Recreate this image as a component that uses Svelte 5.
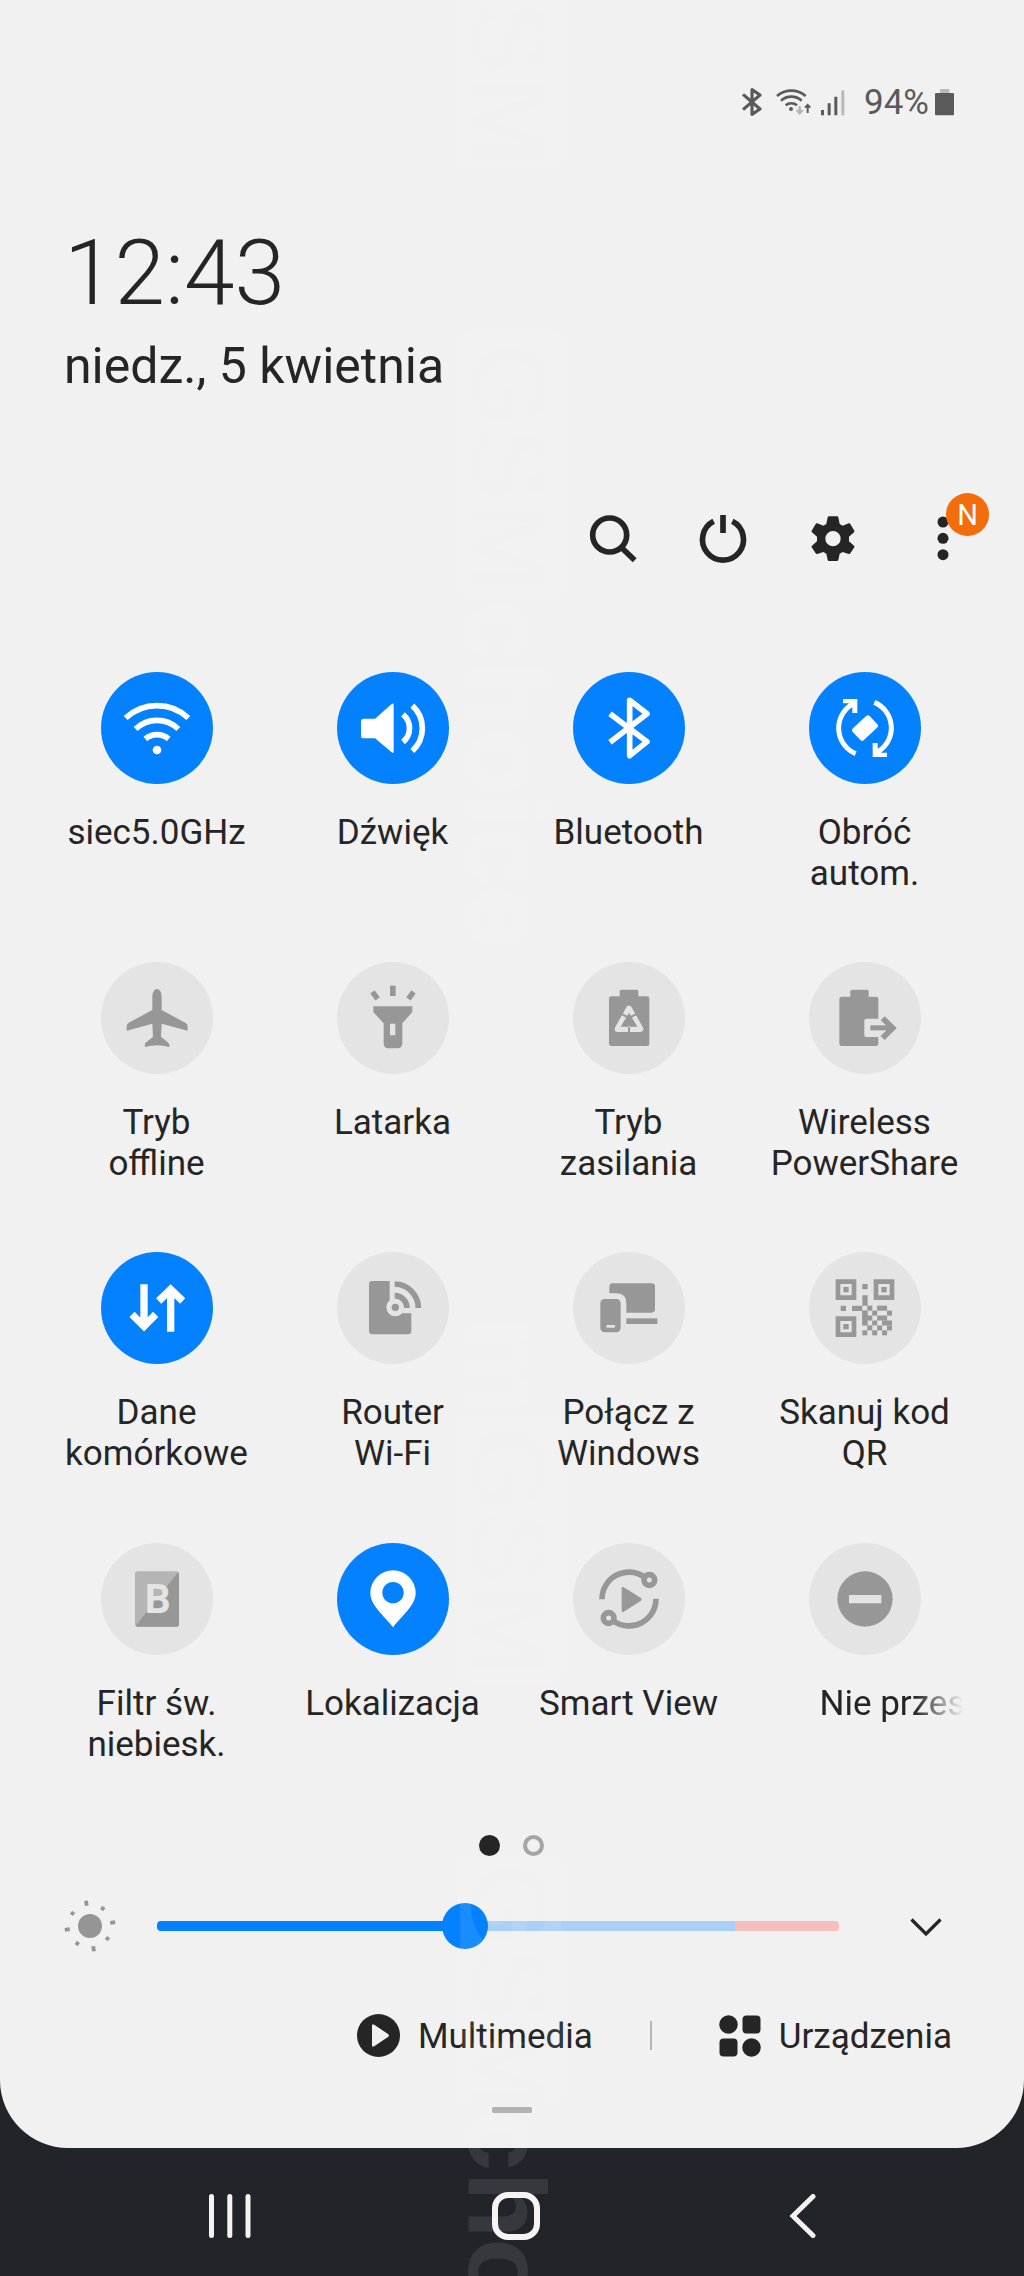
<script>
    const tiles = [
        { icon: 'wifi', label: ['siec5.0GHz'], active: true },
        { icon: 'sound', label: ['Dźwięk'], active: true },
        { icon: 'bluetooth', label: ['Bluetooth'], active: true },
        { icon: 'rotate', label: ['Obróć', 'autom.'], active: true },
        { icon: 'plane', label: ['Tryb', 'offline'] },
        { icon: 'torch', label: ['Latarka'] },
        { icon: 'power', label: ['Tryb', 'zasilania'] },
        { icon: 'share', label: ['Wireless', 'PowerShare'] },
        { icon: 'data', label: ['Dane', 'komórkowe'], active: true },
        { icon: 'router', label: ['Router', 'Wi-Fi'] },
        { icon: 'windows', label: ['Połącz z', 'Windows'] },
        { icon: 'qr', label: ['Skanuj kod', 'QR'] },
        { icon: 'filter', label: ['Filtr św.', 'niebiesk.'] },
        { icon: 'location', label: ['Lokalizacja'], active: true },
        { icon: 'smartview', label: ['Smart View'] },
        { icon: 'dnd', label: ['Nie przes'], scrolling: true }
    ];

    // lower right part of the QR icon, one string per row
    const qrRows = ['010110', '101001', '110110', '101011', '010101', '101010'];
    const qrCells = qrRows.flatMap((row, y) =>
        [...row].map((on, x) => ({ on: on === '1', x, y })).filter((cell) => cell.on)
    );

    const rays = [0, 45, 90, 135, 180, 225, 270, 315];

    let brightness = 45.2;
    let warning = 84.8;
</script>

<div class="screen">
    <main class="panel">
        <div class="status">
            <svg class="st-bt" viewBox="0 0 60 84" fill="none" stroke="#5a5a5a" stroke-width="9.500" stroke-linejoin="round">
                <path d="M3 19L54 63L30 79V5L54 21L3 65" />
            </svg>
            <svg class="st-wifi" viewBox="0 0 108 84" fill="none" stroke="#5a5a5a" stroke-width="8">
                <path d="M3 24A66 66 0 0 1 89 24M15 38A46 46 0 0 1 77 38M29 52A26 26 0 0 1 63 52" />
                <circle cx="45" cy="63" r="6" fill="#5a5a5a" stroke="none" />
                <path d="M71 54V72M62 66L71 76L80 66" stroke="#b5b5b5" stroke-width="7" />
                <path d="M95 75V54M87 59L95 51L103 59" stroke-width="6" />
            </svg>
            <svg class="st-signal" viewBox="0 0 72 84">
                <path d="M0 66h9v16h-9zM20 46h9v36h-9zM40 26h9v56h-9z" fill="#5a5a5a" />
                <path d="M61 7h9v75h-9z" fill="#b9b9b9" />
            </svg>
            <span class="percent">94%</span>
            <svg class="st-battery" viewBox="0 0 57 84">
                <path d="M15 3H43V16H15z" fill="#b9b9b9" />
                <rect y="15" width="57" height="67" rx="3" fill="#5a5a5a" />
            </svg>
        </div>

        <header class="clock">
            <div class="time">12:43</div>
            <div class="date">niedz., 5 kwietnia</div>
        </header>

        <nav class="actions">
            <button aria-label="Szukaj">
                <svg viewBox="-78 -78 156 156" fill="none" stroke="#252525" stroke-width="17">
                    <circle cx="-10" cy="-12" r="51" />
                    <path d="M26 26L65 64" />
                </svg>
            </button>
            <button aria-label="Zasilanie">
                <svg viewBox="-78 -78 156 156" fill="none" stroke="#252525" stroke-width="17">
                    <path d="M-28 -53A61.500 61.500 0 1 0 28 -53M0 -72V-18" />
                </svg>
            </button>
            <button aria-label="Ustawienia">
                <svg viewBox="-78 -78 156 156" fill="#252525">
                    <path
                        fill-rule="evenodd"
                        d="M-12 -68H12Q15 -68 16 -65L20 -45L29 -40L47 -47Q50 -48 52 -45L64 -25Q65 -22 63 -20L48 -7V7L63 20Q65 22 64 25L52 43Q50 46 47 45L29 39L20 44L16 63Q15 66 12 66H-12Q-15 66 -16 63L-20 44L-29 39L-47 45Q-50 46 -52 43L-64 25Q-65 22 -63 20L-48 7V-7L-63 -20Q-65 -22 -64 -25L-52 -45Q-50 -48 -47 -47L-29 -40L-20 -45L-16 -65Q-15 -68 -12 -68zM0 -24A23 23 0 1 0 0 22A23 23 0 1 0 0 -24z"
                    />
                </svg>
            </button>
            <button class="more" aria-label="Więcej">
                <svg viewBox="-78 -78 156 156" fill="#252525">
                    <circle cy="-51" r="16.500" />
                    <circle cy="-2" r="16.500" />
                    <circle cy="47" r="16.500" />
                </svg>
                <span class="badge">N</span>
            </button>
        </nav>

        <section class="tiles">
            {#each tiles as tile}
                <div class="tile" class:active={tile.active}>
                    <div class="disc">
                        <svg viewBox="-168 -168 336 336">
                            {#if tile.icon === 'wifi'}
                                <path class="line" d="M-94 -30A138 138 0 0 1 94 -30M-64 3A92 92 0 0 1 64 3M-35 33A54 54 0 0 1 35 33" />
                                <circle cy="66" r="13" />
                            {:else if tile.icon === 'sound'}
                                <path d="M-88 -28H-54L-4 -72Q2 -76 2 -69V70Q2 78 -4 73L-54 31H-88Q-96 31 -96 23V-20Q-96 -28 -88 -28z" />
                                <path class="line" d="M30 -41A54 54 0 0 1 30 42M58 -67A92 92 0 0 1 58 69" />
                            {:else if tile.icon === 'bluetooth'}
                                <path class="line round" d="M-57 -43L54 41L2 83V-83L54 -43L-57 43" />
                            {:else if tile.icon === 'rotate'}
                                {#each [0, 180] as turn}
                                    <g transform="rotate({turn})">
                                        <path class="line thin" d="M-28 77A83 83 0 0 1 -40 -70" />
                                        <path d="M-66 -87H-23V-45H-38V-62L-50 -74H-66z" />
                                    </g>
                                {/each}
                                <rect x="-35" y="-24" width="70" height="48" rx="8" transform="rotate(-43)" />
                            {:else if tile.icon === 'plane'}
                                <path d="M0 -87C9 -87 14 -76 14 -62V-24L86 15Q92 19 92 25V38L14 17L12 56L34 74Q38 78 37 87Q18 82 0 82Q-18 82 -36 87Q-38 78 -34 74L-12 56L-14 17L-91 38V25Q-91 19 -86 15L-14 -24V-62C-14 -76 -9 -87 0 -87z" />
                            {:else if tile.icon === 'torch'}
                                <path fill-rule="evenodd" d="M-59 -35H58V-18L28 16V76Q28 91 13 91H-14Q-28 91 -28 76V16L-59 -18zM-9 17V52H7V17z" />
                                <path d="M-9 -97H8V-66H-9z" />
                                <path d="M-8 -13H8V13H-8z" transform="translate(-54 -68) rotate(-36)" />
                                <path d="M-8 -13H8V13H-8z" transform="translate(54 -68) rotate(36)" />
                            {:else if tile.icon === 'power'}
                                <rect x="-28" y="-85" width="56" height="30" rx="5" />
                                <rect x="-60" y="-65" width="121" height="149" rx="7" />
                                <path class="cut-line" d="M0 -28L34 33H-34z" />
                                <path d="M-3 8H3V50H-3zM0 -16L-25 26H25z" />
                                <path d="M-3 0H3V42H-3z" transform="rotate(118)" />
                                <path d="M-3 0H3V42H-3z" transform="rotate(-118)" />
                            {:else if tile.icon === 'share'}
                                <rect x="-44" y="-85" width="55" height="30" rx="5" />
                                <rect x="-77" y="-64" width="117" height="148" rx="7" />
                                <rect class="cut" x="-2" y="2" width="56" height="55" rx="6" />
                                <path d="M16 22H74V37H16z" />
                                <path class="line" d="M53 1L83 30L53 60" />
                            {:else if tile.icon === 'data'}
                                <path class="line thick" d="M-39 -71V58M-75 19L-39 55L-4 19M41 71V-57M5 -21L41 -56L77 -21" />
                            {:else if tile.icon === 'router'}
                                <path d="M-62 -81H-10V16H55V69Q55 79 45 79H-62Q-72 79 -72 69V-71Q-72 -81 -62 -81z" />
                                <circle class="cut" cx="7" cy="-2" r="27" />
                                <circle cx="7" cy="-2" r="11" />
                                <path class="line" d="M5 -37A37 37 0 0 1 42 0M5 -72A72 72 0 0 1 76 0" />
                            {:else if tile.icon === 'windows'}
                                <path d="M-59 -44V-64Q-59 -74 -49 -74H68Q78 -74 78 -64V4Q78 14 68 14H-8V-14Q-8 -44 -37 -44z" />
                                <path d="M-8 31H85V48H-8z" />
                                <rect x="-86" y="-27" width="61" height="100" rx="13" />
                                <rect class="cut" x="-68" y="51" width="26" height="8" rx="3" />
                            {:else if tile.icon === 'qr'}
                                {#each [[-57, -55], [57, -55], [-57, 56]] as [x, y]}
                                    <g transform="translate({x} {y})">
                                        <path fill-rule="evenodd" d="M-31 -31H31V31H-31zM-17 -17V17H17V-17z" />
                                        <path d="M-8 -8H8V8H-8z" />
                                    </g>
                                {/each}
                                <path d="M-8 -72H8V-56H-8zM-73 -7H-57V9H-73zM-8 -38H8V-7H-8zM-39 -7H-8V9H-39zM-8 8H8V52H-8z" />
                                {#each qrCells as cell}
                                    <rect x={-8 + cell.x * 14.8} y={-7 + cell.y * 14.8} width="15" height="15" />
                                {/each}
                            {:else if tile.icon === 'filter'}
                                <rect class="pale" x="-66" y="-83" width="132" height="166" rx="8" />
                                <path d="M63 -80Q66 -78 66 -75V75Q66 83 58 83H-58Q-61 83 -64 80z" />
                                <text x="2" y="41">B</text>
                            {:else if tile.icon === 'location'}
                                <path fill-rule="evenodd" d="M-68 -18A68 68 0 0 1 68 -18C68 19 28 48 0 85C-28 48 -68 19 -68 -18zM0 -51A32 32 0 1 0 0 13A32 32 0 1 0 0 -51z" />
                            {:else if tile.icon === 'smartview'}
                                {#each [0, 180] as turn}
                                    <g transform="rotate({turn})">
                                        <path class="line" d="M-81 1A81 81 0 0 1 45 -67" />
                                        <circle class="line" cx="61" cy="-57" r="16" />
                                    </g>
                                {/each}
                                <path d="M-22 -32Q-22 -38 -16 -35L36 -3Q40 1 36 5L-16 38Q-22 41 -22 35z" />
                            {:else if tile.icon === 'dnd'}
                                <circle r="83" />
                                <path class="cut" d="M-48 -12H49V13H-48z" />
                            {/if}
                        </svg>
                    </div>
                    <div class="label" class:scrolling={tile.scrolling}>
                        {#each tile.label as line}
                            <div>{line}</div>
                        {/each}
                    </div>
                </div>
            {/each}
        </section>

        <div class="pager">
            <span class="dot current"></span>
            <span class="dot"></span>
        </div>

        <div class="brightness">
            <svg class="sun" viewBox="-27 -27 54 54" fill="#959595">
                <circle r="12" />
                {#each rays as angle}
                    <rect x="-1.900" y={angle % 90 ? -23.5 : -25.5} width="3.800" height={angle % 90 ? 3.8 : 5} transform="rotate({angle - 9})" />
                {/each}
            </svg>
            <div class="slider">
                <div class="track">
                    <div class="filled" style="width: {brightness}%"></div>
                    <div class="rest" style="width: {warning - brightness}%"></div>
                    <div class="hot"></div>
                </div>
                <div class="thumb" style="left: {brightness}%"></div>
            </div>
            <svg class="expand" viewBox="0 0 34 20" fill="none" stroke="#252525" stroke-width="3.200">
                <path d="M2.500 2.500L17 17L31.500 2.500" />
            </svg>
        </div>

        <div class="footer">
            <div class="link">
                <svg viewBox="0 0 43 43" class="media">
                    <circle cx="21.500" cy="21.500" r="21.500" fill="#252525" />
                    <path d="M15 12Q15 9.500 17.200 10.800L31 20Q33 21.500 31 23L17.200 32.200Q15 33.500 15 31z" fill="#f1f1f1" />
                </svg>
                <span>Multimedia</span>
            </div>
            <div class="divider"></div>
            <div class="link">
                <svg viewBox="0 0 42 42" class="devices" fill="#252525">
                    <circle cx="9.500" cy="9.500" r="9.300" />
                    <rect x="23.500" y="0.500" width="18" height="18" rx="4" />
                    <rect x="0.500" y="23.500" width="18" height="18" rx="4" />
                    <circle cx="32.500" cy="32.500" r="9.300" />
                </svg>
                <span>Urządzenia</span>
            </div>
        </div>

        <div class="handle"></div>
    </main>

    <footer class="navbar">
        <svg class="recents" viewBox="0 0 42 44" stroke="#f5f4f1" stroke-width="5" stroke-linecap="round">
            <path d="M2.500 2.500V41.500M20.800 2.500V41.500M39 2.500V41.500" />
        </svg>
        <svg class="home" viewBox="0 0 48 48" fill="none" stroke="#f5f4f1" stroke-width="6">
            <rect x="3" y="3" width="42" height="42" rx="13" />
        </svg>
        <svg class="back" viewBox="0 0 27 44" fill="none" stroke="#f5f4f1" stroke-width="5" stroke-linecap="round">
            <path d="M24 2.500L4 22L24 41.500" />
        </svg>
    </footer>

    <!-- translucent strip running down the middle -->
    <svg class="strip" viewBox="0 0 1024 2276">
        <defs>
            <mask id="cutout">
                <rect width="1024" height="2276" fill="#fff" />
                {#each [-84, 342, 1426, 1862] as y}
                    <text transform="translate(472 {y}) rotate(90)" fill="#000">GSM</text>
                {/each}
            </mask>
        </defs>
        <g mask="url(#cutout)">
            {#each [-98, 332, 1416, 1856] as y}
                <rect x="460" {y} width="102" height={y > 1800 ? 250 : 266} rx="10" />
            {/each}
        </g>
        <text transform="translate(469 600) rotate(90)">choice</text>
        <text transform="translate(469 1318) rotate(90)">m</text>
        <text transform="translate(469 2110) rotate(90)">cho</text>
    </svg>
</div>

<style>
    :global(body) {
        margin: 0;
        background: #212529;
    }

    .screen {
        position: relative;
        width: 1024px;
        height: 2276px;
        overflow: hidden;
        background: #212529;
        color: #252525;
        font-family: Roboto, sans-serif;
    }

    .panel {
        box-sizing: border-box;
        display: flex;
        flex-direction: column;
        height: 2148px;
        padding-top: 82px;
        background: #f1f1f1;
        border-radius: 0 0 68px 68px;
    }

    svg {
        display: block;
        flex: none;
    }

    .status {
        display: flex;
        align-items: center;
        justify-content: flex-end;
        height: 40px;
        padding-right: 70px;
        color: #5a5a5a;
    }

    .st-bt {
        width: 20px;
        height: 28px;
        margin-right: 14px;
    }

    .st-wifi {
        width: 36px;
        height: 28px;
        margin-right: 9px;
    }

    .st-signal {
        width: 24px;
        height: 28px;
        margin-right: 19px;
    }

    .percent {
        padding-top: 2px;
        font-size: 35px;
        line-height: 40px;
        margin-right: 6px;
    }

    .st-battery {
        width: 19px;
        height: 28px;
    }

    .clock {
        height: 360px;
        padding: 97px 64px 0;
        box-sizing: border-box;
    }

    .time {
        font-size: 91px;
        font-weight: 300;
        line-height: 108px;
    }

    .date {
        margin-top: 9px;
        font-size: 50px;
        line-height: 60px;
    }

    .actions {
        display: flex;
        justify-content: flex-end;
        gap: 58px;
        margin-top: 31px;
        padding-right: 55px;
    }

    .actions button {
        position: relative;
        width: 52px;
        height: 52px;
        padding: 0;
        border: none;
        background: none;
    }

    .badge {
        position: absolute;
        top: -20px;
        left: 29px;
        width: 43px;
        height: 43px;
        border-radius: 50%;
        background: #f36d0c;
        color: #fff;
        font: 400 29px/45px Roboto, sans-serif;
        text-align: center;
    }

    .tiles {
        display: grid;
        grid-template-columns: repeat(4, 236px);
        grid-auto-rows: 290.2px;
        margin: 107px 0 0 38.5px;
    }

    .tile {
        display: flex;
        flex-direction: column;
        align-items: center;
    }

    .disc {
        width: 112px;
        height: 112px;
        border-radius: 50%;
        background: #e4e4e4;
        fill: #979797;
        stroke: #979797;
    }

    .active .disc {
        background: #0381fe;
        fill: #fff;
        stroke: #fff;
    }

    .disc svg {
        stroke-width: 0;
    }

    .disc .line {
        fill: none;
        stroke-width: 17px;
    }

    .disc .thin {
        stroke-width: 15px;
    }

    .disc .thick {
        stroke-width: 22px;
    }

    .disc .round {
        stroke-linejoin: round;
    }

    .disc .cut {
        fill: #e4e4e4;
    }

    .disc .cut-line {
        fill: none;
        stroke: #e4e4e4;
        stroke-width: 18px;
        stroke-linejoin: round;
    }

    .disc .pale {
        fill: #b5b5b5;
    }

    .disc text {
        fill: #e4e4e4;
        font-size: 122px;
        font-weight: 700;
        text-anchor: middle;
    }

    .label {
        margin-top: 28px;
        font-size: 35px;
        line-height: 41px;
        text-align: center;
        white-space: nowrap;
    }

    .scrolling {
        box-sizing: border-box;
        width: 196px;
        padding-left: 53px;
        text-align: left;
        mask-image: linear-gradient(to right, #000 75%, transparent);
    }

    .pager {
        display: flex;
        justify-content: center;
        gap: 23px;
        margin: 2px 2px 0 0;
    }

    .dot {
        box-sizing: border-box;
        width: 21px;
        height: 21px;
        border: 4px solid #a5a5a5;
        border-radius: 50%;
    }

    .current {
        border: none;
        background: #252525;
    }

    .brightness {
        display: flex;
        align-items: center;
        height: 54px;
        margin-top: 43px;
        padding-left: 63px;
    }

    .sun {
        width: 54px;
        height: 54px;
    }

    .slider {
        position: relative;
        width: 682px;
        margin-left: 40px;
    }

    .track {
        display: flex;
        height: 10px;
        border-radius: 4px;
        overflow: hidden;
    }

    .filled {
        background: #0381fe;
    }

    .rest {
        background: #a9d0f7;
    }

    .hot {
        flex: 1;
        background: #f7bebe;
    }

    .thumb {
        position: absolute;
        top: -18px;
        width: 46px;
        height: 46px;
        margin-left: -23px;
        border-radius: 50%;
        background: #0381fe;
    }

    .expand {
        width: 34px;
        height: 20px;
        margin: 3px 0 0 70px;
    }

    .footer {
        display: flex;
        align-items: center;
        justify-content: flex-end;
        height: 44px;
        margin-top: 61px;
        padding-right: 72px;
        font-size: 35px;
        line-height: 44px;
    }

    .link {
        display: flex;
        align-items: center;
    }

    .link span {
        padding-top: 2px;
    }

    .media {
        width: 43px;
        height: 43px;
        margin-right: 18px;
    }

    .devices {
        width: 42px;
        height: 42px;
        margin-right: 18px;
    }

    .divider {
        width: 2px;
        height: 29px;
        margin: 0 67px 0 57px;
        background: #b5b5b5;
    }

    .handle {
        width: 40px;
        height: 6px;
        margin: 49px auto 0;
        border-radius: 2px;
        background: #b2b2b2;
    }

    .navbar {
        display: flex;
        align-items: center;
        height: 128px;
        padding: 8px 0 0 209px;
        box-sizing: border-box;
    }

    .recents {
        width: 42px;
        height: 44px;
    }

    .home {
        width: 48px;
        height: 48px;
        margin-left: 241px;
    }

    .back {
        width: 27px;
        height: 44px;
        margin-left: 249px;
    }

    .strip {
        position: absolute;
        inset: 0;
        width: 1024px;
        height: 2276px;
        fill: #fff;
        fill-opacity: 0.09;
        pointer-events: none;
    }

    .strip text {
        font: 700 110px 'Liberation Sans', sans-serif;
    }

    .strip mask * {
        fill-opacity: 1;
    }
</style>
